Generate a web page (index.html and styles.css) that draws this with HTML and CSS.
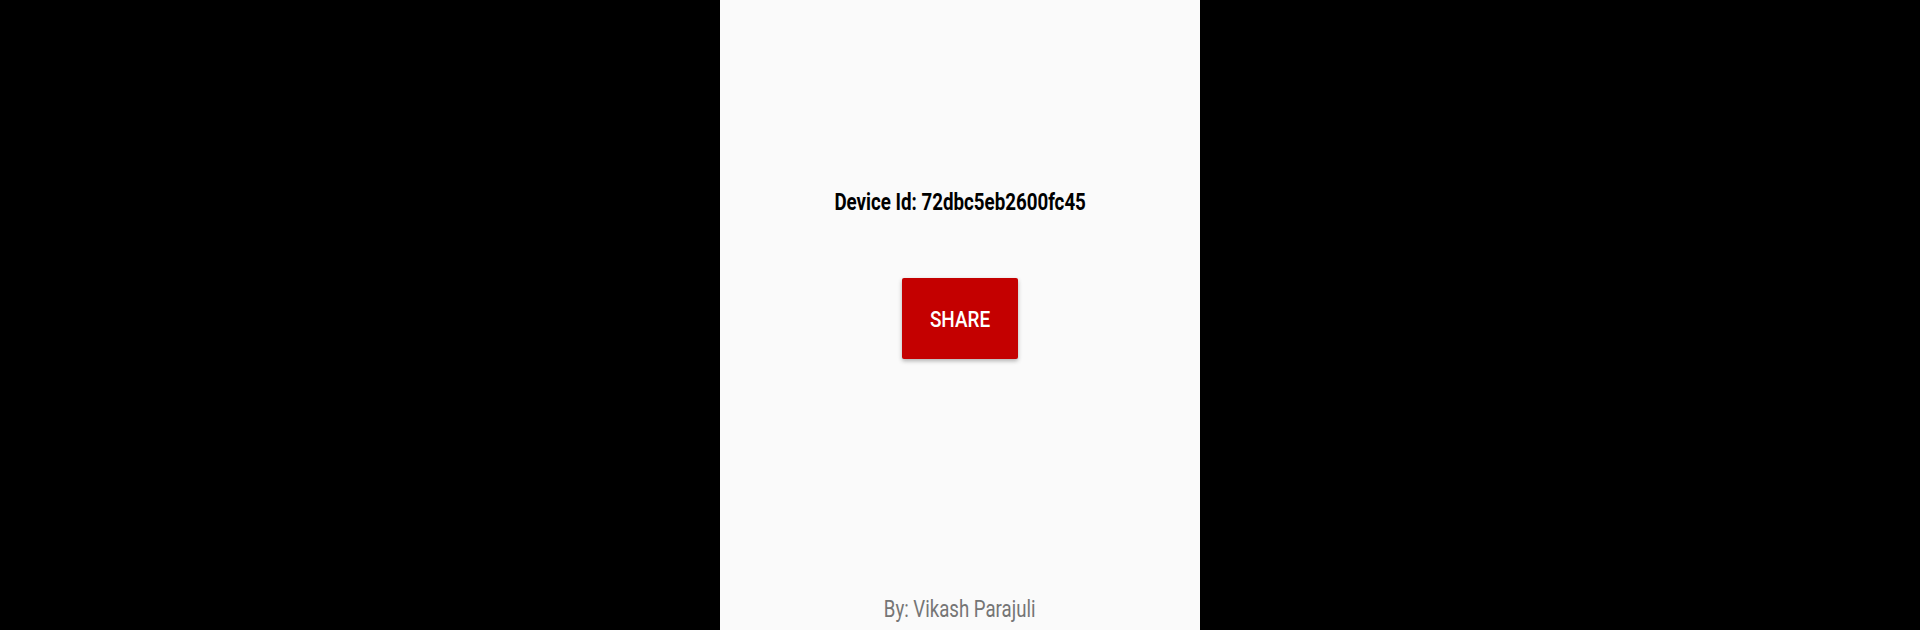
FILE: index.html
```html
<!DOCTYPE html>
<html>
<head>
<meta charset="utf-8">
<link rel="stylesheet" href="styles.css">
</head>
<body>
<div class="screen">
  <div class="device-id">Device Id: 72dbc5eb2600fc45</div>
  <button class="share"><span class="share-label">SHARE</span></button>
  <div class="footer">By: Vikash Parajuli</div>
</div>
</body>
</html>
```
FILE: styles.css
```css
html, body {
  margin: 0;
  padding: 0;
  height: 630px;
  background: #000;
  overflow: hidden;
}
body {
  display: flex;
  justify-content: center;
  font-family: Roboto, "Liberation Sans", sans-serif;
}
.screen {
  width: 480px;
  height: 630px;
  background: #fafafa;
  display: flex;
  flex-direction: column;
  align-items: center;
  box-sizing: border-box;
  padding-top: 188px;
}
.device-id {
  font-size: 24px;
  font-weight: 700;
  color: #000;
  line-height: 28px;
  transform: scaleX(0.78);
}
.share {
  margin-top: 62px;
  width: 116px;
  height: 81px;
  border: none;
  border-radius: 2px;
  background: #c40000;
  color: #fff;
  font-family: Roboto, "Liberation Sans", sans-serif;
  font-size: 22px;
  font-weight: 500;
  box-shadow: 0 2px 4px rgba(0,0,0,0.3);
  padding: 0;
}
.share-label {
  display: inline-block;
  transform: scaleX(0.86);
  position: relative;
  top: 1px;
}
.footer {
  margin-top: auto;
  margin-bottom: 6px;
  font-size: 23px;
  color: #757575;
  line-height: 28px;
  transform: scaleX(0.81);
}
```
